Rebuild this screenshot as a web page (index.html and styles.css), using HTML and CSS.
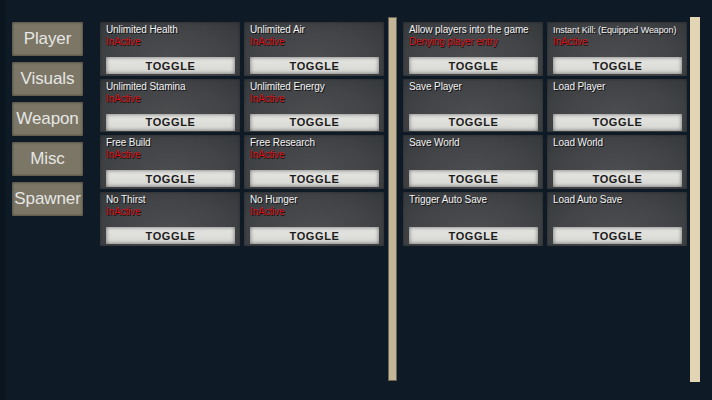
FILE: index.html
```html
<!DOCTYPE html>
<html>
<head>
<meta charset="utf-8">
<link rel="stylesheet" href="styles.css">
</head>
<body>
<div class="app">
  <nav class="nav">
    <div class="nav-btn">Player</div>
    <div class="nav-btn">Visuals</div>
    <div class="nav-btn">Weapon</div>
    <div class="nav-btn">Misc</div>
    <div class="nav-btn">Spawner</div>
  </nav>

  <section class="panel panel-left">
    <div class="grid">
      <div class="card"><div class="title">Unlimited Health</div><div class="status">InActive</div><div class="toggle">TOGGLE</div></div>
      <div class="card"><div class="title">Unlimited Air</div><div class="status">InActive</div><div class="toggle">TOGGLE</div></div>
      <div class="card"><div class="title">Unlimited Stamina</div><div class="status">InActive</div><div class="toggle">TOGGLE</div></div>
      <div class="card"><div class="title">Unlimited Energy</div><div class="status">InActive</div><div class="toggle">TOGGLE</div></div>
      <div class="card"><div class="title">Free Build</div><div class="status">InActive</div><div class="toggle">TOGGLE</div></div>
      <div class="card"><div class="title">Free Research</div><div class="status">InActive</div><div class="toggle">TOGGLE</div></div>
      <div class="card"><div class="title">No Thirst</div><div class="status">InActive</div><div class="toggle">TOGGLE</div></div>
      <div class="card"><div class="title">No Hunger</div><div class="status">InActive</div><div class="toggle">TOGGLE</div></div>
    </div>
    <div class="scrollbar scrollbar-a"></div>
  </section>

  <section class="panel panel-right">
    <div class="grid">
      <div class="card"><div class="title">Allow players into the game</div><div class="status">Denying player entry</div><div class="toggle">TOGGLE</div></div>
      <div class="card"><div class="title title-fit">Instant Kill: (Equipped Weapon)</div><div class="status">InActive</div><div class="toggle">TOGGLE</div></div>
      <div class="card"><div class="title">Save Player</div><div class="status"></div><div class="toggle">TOGGLE</div></div>
      <div class="card"><div class="title">Load Player</div><div class="status"></div><div class="toggle">TOGGLE</div></div>
      <div class="card"><div class="title">Save World</div><div class="status"></div><div class="toggle">TOGGLE</div></div>
      <div class="card"><div class="title">Load World</div><div class="status"></div><div class="toggle">TOGGLE</div></div>
      <div class="card"><div class="title">Trigger Auto Save</div><div class="status"></div><div class="toggle">TOGGLE</div></div>
      <div class="card"><div class="title">Load Auto Save</div><div class="status"></div><div class="toggle">TOGGLE</div></div>
    </div>
    <div class="scrollbar scrollbar-b"></div>
  </section>
</div>
</body>
</html>
```

FILE: styles.css
```css
html, body {
  margin: 0;
  padding: 0;
}
body {
  width: 712px;
  height: 400px;
  background: #0e1a26;
  font-family: "Liberation Sans", Arial, sans-serif;
  overflow: hidden;
}
.app {
  display: flex;
  align-items: flex-start;
  height: 400px;
  background: linear-gradient(to right, #0b151f 0, #0b151f 5px, #0e1a26 5px);
}
.nav {
  display: flex;
  flex-direction: column;
  gap: 6px;
  margin-left: 12px;
  margin-top: 22px;
  width: 71px;
}
.nav-btn {
  height: 34px;
  box-sizing: border-box;
  background: #7b7666;
  box-shadow: inset 0 0 3px rgba(40, 36, 26, 0.8);
  color: #e6e6e4;
  font-size: 17px;
  display: flex;
  align-items: center;
  justify-content: center;
  letter-spacing: -0.1px;
}
.panel {
  display: flex;
  align-items: flex-start;
}
.panel-left {
  margin-left: 17px;
}
.panel-right {
  margin-left: 6px;
}
.grid {
  display: grid;
  grid-template-columns: 140px 140px;
  grid-auto-rows: 53.7px;
  column-gap: 4px;
  row-gap: 3px;
  margin-top: 22px;
}
.card {
  position: relative;
  background: radial-gradient(ellipse at 50% 70%, #4b4d4f 0%, #424447 55%, #35383b 100%);
  box-shadow: inset 0 0 3px rgba(0, 0, 0, 0.35);
  padding: 2px 5px 0 6px;
  display: flex;
  flex-direction: column;
  box-sizing: border-box;
}
.title {
  color: #f2f2f2;
  font-size: 10px;
  line-height: 12px;
  height: 12px;
  white-space: nowrap;
  letter-spacing: -0.1px;
  text-shadow: 1px 1px 0 #111;
}
.title-fit {
  font-size: 9px;
  letter-spacing: -0.1px;
}
.status {
  color: #d0141a;
  font-size: 10px;
  line-height: 12px;
  height: 12px;
  white-space: nowrap;
  letter-spacing: -0.15px;
  text-shadow: 1px 1px 0 #1a0a0a;
}
.toggle {
  margin-top: 9px;
  height: 17px;
  background: linear-gradient(#e6e6e3, #d6d7d3);
  box-shadow: inset 0 0 4px rgba(0, 0, 0, 0.55);
  color: #1c1c1c;
  font-size: 11px;
  font-weight: bold;
  letter-spacing: 0.6px;
  display: flex;
  align-items: center;
  justify-content: center;
}
.scrollbar {
  margin-top: 17px;
  height: 364px;
  box-sizing: border-box;
}
.scrollbar-a {
  margin-left: 4px;
  width: 9px;
  background: #c2b598;
  border: 1px solid #6d6553;
}
.scrollbar-b {
  margin-left: 3px;
  width: 10px;
  height: 365px;
  background: #e2d5b4;
}
```
